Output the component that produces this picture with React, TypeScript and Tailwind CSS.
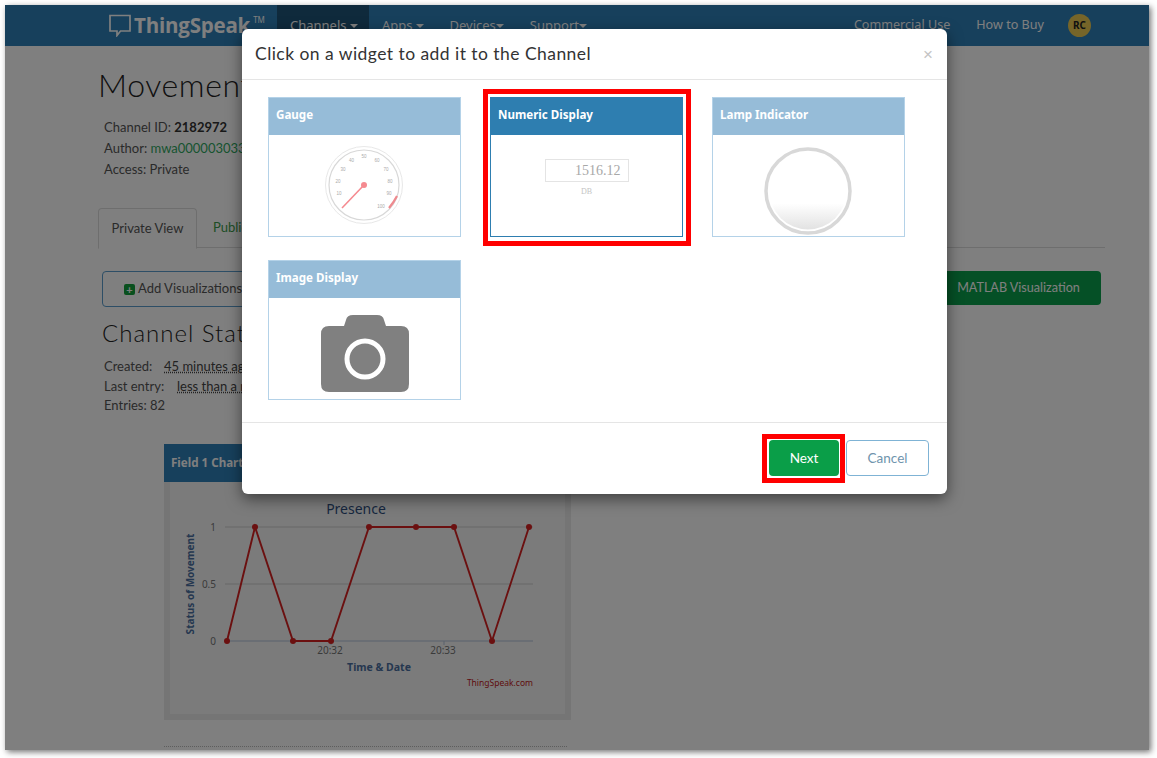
import React from 'react';

const navLeft = ['Apps', 'Devices', 'Support'];

const points = [
  [63, 42], [91, -72], [129, 42], [167, 42], [205, -72], [252, -72], [290, -72], [328, 42], [365, -72],
];

const Caret = ({ tight }: { tight?: boolean }) => (
  <span className={`inline-block align-middle border-x-[4px] border-x-transparent border-t-[4px] border-t-white ${tight ? 'ml-0' : 'ml-[3px]'}`} />
);

const Gauge = () => {
  const labels: [string, number, number][] = [
    ['10', 14, 48.5], ['20', 13, 36.5], ['30', 18, 24.5], ['40', 26.5, 15.5], ['50', 39, 11.5], ['60', 52, 15.5],
    ['70', 61, 24.5], ['80', 65, 36.5], ['90', 64, 48.5], ['100', 56, 61.5],
  ];
  return (
    <svg width="80" height="80" viewBox="0 0 80 80">
      <circle cx="39" cy="39" r="38.5" fill="none" stroke="#e8e8e8" strokeWidth="1" />
      <circle cx="39" cy="39" r="35" fill="none" stroke="#d8d8d8" strokeWidth="1.2" />
      {labels.map(([t, x, y]) => (
        <text key={t} x={x} y={y} fontSize="4.5" fill="#aaa" textAnchor="middle" fontFamily="Liberation Sans, sans-serif">{t}</text>
      ))}
      <path d="M72 50 Q69 56 64 62" fill="none" stroke="#ee8a8f" strokeWidth="2.2" />
      <line x1="39" y1="39" x2="17" y2="62" stroke="#f58a90" strokeWidth="1.6" />
      <circle cx="39" cy="39" r="3" fill="#f58a90" />
    </svg>
  );
};

const Lamp = () => (
  <svg width="90" height="90" viewBox="0 0 90 90">
    <defs>
      <linearGradient id="lampFill" x1="0" y1="0" x2="0" y2="1">
        <stop offset="0.66" stopColor="#ffffff" />
        <stop offset="1" stopColor="#e2e2e2" />
      </linearGradient>
    </defs>
    <circle cx="45" cy="45" r="42" fill="#fff" stroke="#d8d8d8" strokeWidth="3.5" />
    <circle cx="45" cy="45" r="38.5" fill="url(#lampFill)" />
  </svg>
);

const Camera = () => (
  <svg width="88" height="78" viewBox="0 0 88 78">
    <path
      d="M8 11H23L25 5Q26 0 32 0H56Q62 0 63 5L65 11H80Q88 11 88 19V69Q88 77 80 77H8Q0 77 0 69V19Q0 11 8 11Z"
      fill="#808080"
    />
    <circle cx="44" cy="44" r="18" fill="none" stroke="#fff" strokeWidth="5" />
  </svg>
);

const NumericDisplay = () => (
  <div className="flex flex-col items-center pt-[24px]">
    <div className="w-[84px] h-[23px] border border-[#e4e4e4] text-right pr-[7px] text-[14px] leading-[21px] text-[#a8a8a8] font-['Liberation_Serif',serif]">
      1516.12
    </div>
    <div className="text-[8px] leading-[19px] text-[#c4c4c4] font-['Liberation_Serif',serif]">DB</div>
  </div>
);

const WidgetCard = ({ title, active, children }: { title: string; active?: boolean; children?: React.ReactNode }) => (
  <div className={`relative h-[140px] border bg-white ${active ? 'border-[#2e7eb0]' : 'border-[#b4d2e8]'}`}>
    <div className={`h-[37px] px-[7px] pb-[4px] flex items-center text-white text-[11.6px] font-bold font-['Noto_Sans',sans-serif] ${active ? 'bg-[#2e7eb0]' : 'bg-[#96bcd8]'}`}>
      {title}
    </div>
    {children}
    {active && <div className="absolute -left-[8px] -top-[9px] -right-[9px] -bottom-[10px] border-[5px] border-[#ff0000]" />}
  </div>
);

const Chart = () => (
  <svg width="395" height="225" viewBox="0 0 395 225" className="block">
    <text x="186" y="32" fontSize="14" fill="#2f4f7f" textAnchor="middle" fontFamily="Noto Sans, sans-serif">Presence</text>
    <g transform="translate(-6,117)">
      <line x1="61" x2="369" y1="-72" y2="-72" stroke="#d0d0d0" />
      <line x1="61" x2="369" y1="-15" y2="-15" stroke="#d0d0d0" />
      <line x1="61" x2="369" y1="42" y2="42" stroke="#b4c4da" />
      <line x1="167" x2="167" y1="42" y2="46" stroke="#b4c4da" />
      <line x1="280" x2="280" y1="42" y2="46" stroke="#b4c4da" />
      <g fontSize="10" fill="#777" textAnchor="end" fontFamily="Noto Sans, sans-serif">
        <text x="52" y="-68">1</text>
        <text x="52" y="-11">0.5</text>
        <text x="52" y="46">0</text>
      </g>
      <g fontSize="10" fill="#777" textAnchor="middle" fontFamily="Noto Sans, sans-serif">
        <text x="166" y="55">20:32</text>
        <text x="279" y="55">20:33</text>
      </g>
      <text x="215" y="72" fontSize="10.5" fontWeight="700" fill="#4a6fa0" textAnchor="middle" fontFamily="Noto Sans, sans-serif">Time &amp; Date</text>
      <text x="369" y="87" fontSize="8.5" fill="#c02020" textAnchor="end" fontFamily="Noto Sans, sans-serif">ThingSpeak.com</text>
      <text transform="translate(30,-15) rotate(-90)" fontSize="10" fontWeight="700" fill="#4a6fa0" textAnchor="middle" fontFamily="Noto Sans, sans-serif">Status of Movement</text>
      <polyline points={points.map((p) => p.join(',')).join(' ')} fill="none" stroke="#d62020" strokeWidth="1.9" />
      {points.map(([x, y]) => (
        <circle key={x} cx={x} cy={y} r="3" fill="#d62020" />
      ))}
    </g>
  </svg>
);

const App = () => {
  return (
    <div className="w-[1157px] h-[758px] bg-white pt-[5px] pl-[5px] overflow-hidden font-['Lato',sans-serif]">
      <div className="relative w-[1144px] h-[745px] bg-white overflow-hidden shadow-[2px_2px_6px_rgba(0,0,0,0.55)]">
        {/* Page behind the dialog */}
        <nav className="h-[41px] bg-[#2e80b8] flex items-center text-white text-[13px] font-['Noto_Sans',sans-serif]">
          <div className="w-[272px] pl-[104px] flex items-center gap-[3px]">
            <svg width="22" height="23" viewBox="0 0 22 23" fill="none" stroke="#fff" strokeWidth="1.7">
              <path d="M1 1.5H21V17H11.5L8 21.5V17H1Z" />
            </svg>
            <span className="text-[20.5px] leading-none font-bold font-['Open_Sans',sans-serif] tracking-[-0.2px]">ThingSpeak</span>
            <span className="text-[8px] self-start">TM</span>
          </div>
          <div className="h-full w-[92px] pl-[13px] flex items-center bg-[#1e5478]">Channels<Caret /></div>
          <div className="flex items-center ml-[13px] gap-[26px]">
            {navLeft.map((n) => (
              <span key={n}>{n}<Caret tight={n !== 'Apps'} /></span>
            ))}
          </div>
          <div className="ml-auto mr-[58px] flex items-center text-[12.6px]">
            <span className="mr-[26px]">Commercial Use</span>
            <span className="mr-[24px]">How to Buy</span>
            <span className="w-[23px] h-[23px] rounded-full bg-[#eccb52] text-[#222] text-[10px] font-bold flex items-center justify-center">RC</span>
          </div>
        </nav>

        <main className="pl-[93px] pr-[44px] text-[#555] text-[13px]">
          <h1 className="pt-[19px] text-[32px] leading-[40px] text-[#222] font-light tracking-[0.6px]">Movement Detection</h1>
          <div className="mt-[12px] ml-[6px] leading-[21px]">
            <div>Channel ID: <b className="text-[#333]">2182972</b></div>
            <div>Author: <span className="text-[#2fa85f]">mwa0000030331</span></div>
            <div>Access: Private</div>
          </div>

          <div className="mt-[28px] h-[40px] border-b border-[#ddd] flex">
            <div className="w-[99px] h-[41px] pt-[1px] border border-[#ddd] border-b-white rounded-t-[4px] bg-white flex items-center justify-center">Private View</div>
            <div className="ml-[16px] pt-[1px] flex items-center text-[#3a9a4a]">Public View</div>
          </div>

          <div className="mt-[23px] ml-[4px] mr-[4px] flex justify-between">
            <div className="w-[160px] h-[36px] border border-[#5a9ccc] rounded-[4px] pl-[21px] flex items-center gap-[3px]">
              <span className="w-[11px] h-[11px] rounded-[2px] bg-[#12a03c] text-white text-[11px] leading-[11px] font-bold text-center">+</span>
              Add Visualizations
            </div>
            <div className="w-[170px] h-[34px] rounded-[4px] bg-[#0aa04c] text-white pl-[5px] flex items-center justify-center text-[12.6px]">
              MATLAB Visualization
            </div>
          </div>

          <h2 className="mt-[11px] ml-[4px] text-[24px] leading-[30px] text-[#222] font-light tracking-[1px]">Channel Stats</h2>
          <div className="mt-[9px] ml-[6px] leading-[19.5px]">
            <div className="flex">
              <span className="w-[60px]">Created:</span>
              <span className="text-[#444] underline decoration-dotted">45 minutes ago</span>
            </div>
            <div className="flex">
              <span className="w-[73px]">Last entry:</span>
              <span className="text-[#444] underline decoration-dotted">less than a minute ago</span>
            </div>
            <div>Entries: 82</div>
          </div>

          <section className="mt-[28px] ml-[66px] w-[407px] h-[276px] bg-[#eaeaea]">
            <div className="h-[38px] bg-[#2e80b8] px-[7px] flex items-center text-white text-[11.6px] font-bold font-['Noto_Sans',sans-serif]">Field 1 Chart</div>
            <div className="mx-[6px] h-[232px] bg-[#f6f6f6]">
              <Chart />
            </div>
          </section>
          <div className="mt-[26px] ml-[66px] w-[403px] border-t border-dotted border-[#bbb]" />
        </main>

        <div className="absolute inset-0 bg-black/50" />

        {/* Dialog */}
        <div className="absolute left-[237px] top-[24px] w-[705px] h-[465px] bg-white rounded-[6px] shadow-[0_5px_15px_rgba(0,0,0,0.5)]">
          <div className="h-[51px] border-b border-[#e5e5e5] pl-[13px] pr-[14px] flex items-center justify-between">
            <span className="text-[17.5px] text-[#333] tracking-[0.45px]">Click on a widget to add it to the Channel</span>
            <span className="text-[17px] leading-none text-[#c4c4c4] font-['Liberation_Sans',sans-serif]">×</span>
          </div>
          <div className="h-[342px] pt-[17px] pl-[26px] grid grid-cols-[193px_193px_193px] gap-x-[29px] gap-y-[23px] content-start">
            <WidgetCard title="Gauge">
              <div className="flex justify-center pt-[11px]"><Gauge /></div>
            </WidgetCard>
            <WidgetCard title="Numeric Display" active>
              <NumericDisplay />
            </WidgetCard>
            <WidgetCard title="Lamp Indicator">
              <div className="flex justify-center pt-[11px] pr-[2px]"><Lamp /></div>
            </WidgetCard>
            <WidgetCard title="Image Display">
              <div className="flex justify-center pt-[17px]"><Camera /></div>
            </WidgetCard>
          </div>
          <div className="border-t border-[#e5e5e5] pt-[17px] pr-[18px] flex justify-end gap-[7px] text-[13.5px]">
            <div className="relative w-[70px] h-[36px] rounded-[4px] bg-[#0a9e48] text-white flex items-center justify-center">
              Next
              <div className="absolute -left-[7px] -top-[6px] -right-[6px] -bottom-[7px] border-[5px] border-[#ff0000]" />
            </div>
            <div className="w-[83px] h-[36px] rounded-[4px] border border-[#7fb3d5] text-[#6f94ad] flex items-center justify-center">Cancel</div>
          </div>
        </div>
      </div>
    </div>
  );
};

export default App;
